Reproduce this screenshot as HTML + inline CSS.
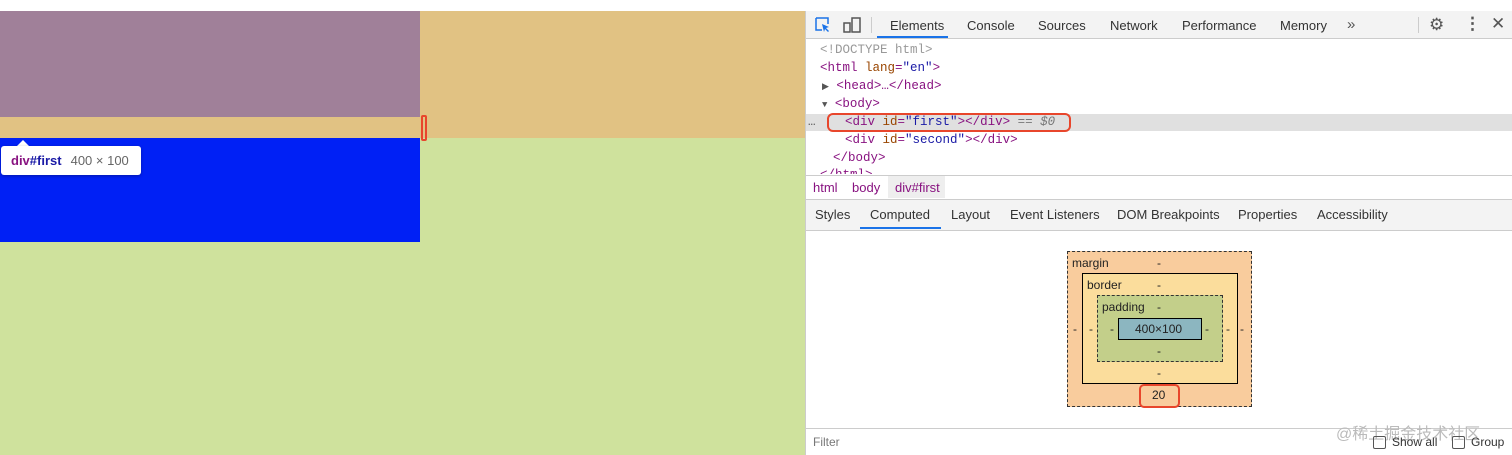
<!DOCTYPE html>
<html><head><meta charset="utf-8"><style>
body{margin:0;width:1512px;height:455px;overflow:hidden;position:relative;font-family:"Liberation Sans",sans-serif;background:#fff}
.a{position:absolute}
.m{font-family:"Liberation Mono",monospace;font-size:12.5px}
.t{font-size:13px;color:#333}
.tg{color:#881280}.at{color:#994500}.av{color:#1a1aa6}
</style></head><body>
<div class="a" style="left:0;top:0;width:1512px;height:11px;background:#fff;border-bottom:1px solid #ccc"></div>
<div class="a" style="left:0;top:11px;width:420px;height:106px;background:#a08099"></div>
<div class="a" style="left:0;top:117px;width:420px;height:21px;background:#e1c283"></div>
<div class="a" style="left:420px;top:11px;width:385px;height:127px;background:#e1c283"></div>
<div class="a" style="left:0;top:138px;width:420px;height:104px;background:#0020f5"></div>
<div class="a" style="left:420px;top:138px;width:385px;height:317px;background:#cfe29d"></div>
<div class="a" style="left:0;top:242px;width:420px;height:213px;background:#cfe29d"></div>
<div class="a" style="left:421px;top:115px;width:6px;height:26px;border:2px solid #e8462c;border-radius:2px;box-sizing:border-box"></div>
<div class="a" style="left:16px;top:140px;width:0;height:0;border:7px solid transparent;border-bottom-color:#fff;border-top:0"></div>
<div class="a" style="left:1px;top:146px;width:140px;height:29px;background:#fff;border-radius:3px;box-shadow:0 1px 3px rgba(0,0,0,.3);font-size:13px;line-height:29px;white-space:nowrap"><b style="margin-left:10px;color:#881280">div</b><b style="color:#1a1aa6">#first</b><span style="color:#666;margin-left:9px">400 × 100</span></div>

<div class="a" style="left:805px;top:11px;width:707px;height:444px;background:#fff;border-left:1px solid #ccc"></div>
<div class="a" style="left:806px;top:11px;width:706px;height:27px;background:#f3f3f3;border-bottom:1px solid #ccc"></div>
<svg class="a" style="left:814px;top:16px" width="50" height="18"><path d="M2 2h12v6M2 2v12h6" fill="none" stroke="#1a73e8" stroke-width="1.5"/><path d="M8 8l7 3-3 1 3 3-1 1-3-3-1 3z" fill="#1a73e8"/><rect x="38" y="2" width="8" height="14" fill="none" stroke="#555" stroke-width="1.5"/><rect x="30" y="7" width="6" height="9" fill="none" stroke="#555" stroke-width="1.5"/></svg>
<div class="a" style="left:871px;top:17px;width:1px;height:16px;background:#ccc"></div>
<div class="a t" style="left:890px;top:18px">Elements</div>
<div class="a" style="left:877px;top:36px;width:71px;height:2px;background:#1a73e8"></div>
<div class="a t" style="left:967px;top:18px">Console</div>
<div class="a t" style="left:1038px;top:18px">Sources</div>
<div class="a t" style="left:1110px;top:18px">Network</div>
<div class="a t" style="left:1182px;top:18px">Performance</div>
<div class="a t" style="left:1280px;top:18px">Memory</div>
<div class="a t" style="left:1347px;top:16px;font-size:15px;color:#555">»</div>
<div class="a" style="left:1418px;top:17px;width:1px;height:16px;background:#ccc"></div>
<div class="a" style="left:1429px;top:15px;font-size:17px;color:#555">⚙</div>
<div class="a" style="left:1464px;top:14px;font-size:17px;color:#555;font-weight:bold">⋮</div>
<div class="a" style="left:1491px;top:14px;font-size:17px;color:#555">✕</div>

<div class="a" style="left:806px;top:114px;width:706px;height:17px;background:#e0e0e0"></div>
<div class="a m" style="left:820px;top:43px;color:#999">&lt;!DOCTYPE html&gt;</div>
<div class="a m tg" style="left:820px;top:61px">&lt;html <span class="at">lang</span>=<span class="av">"en"</span>&gt;</div>
<div class="a m tg" style="left:822px;top:79px"><span style="color:#555;font-size:9px">▶</span> &lt;head&gt;…&lt;/head&gt;</div>
<div class="a m tg" style="left:822px;top:97px"><span style="color:#555;font-size:9px">▼</span> &lt;body&gt;</div>
<div class="a m" style="left:808px;top:115px;color:#555">…</div>
<div class="a m tg" style="left:845px;top:115px">&lt;div <span class="at">id</span>=<span class="av">"first"</span>&gt;&lt;/div&gt; <span style="color:#777">== <i>$0</i></span></div>
<div class="a" style="left:827px;top:113px;width:244px;height:19px;border:2px solid #e8462c;border-radius:6px;box-sizing:border-box"></div>
<div class="a m tg" style="left:845px;top:133px">&lt;div <span class="at">id</span>=<span class="av">"second"</span>&gt;&lt;/div&gt;</div>
<div class="a m tg" style="left:833px;top:151px">&lt;/body&gt;</div>
<div class="a m tg" style="left:820px;top:168px;height:6px;overflow:hidden">&lt;/html&gt;</div>
<div class="a" style="left:806px;top:175px;width:706px;height:1px;background:#ccc"></div>
<div class="a" style="left:888px;top:176px;width:57px;height:22px;background:#eee"></div>
<div class="a t" style="left:813px;top:180px;color:#881280">html</div>
<div class="a t" style="left:852px;top:180px;color:#881280">body</div>
<div class="a t" style="left:895px;top:180px;color:#881280">div#first</div>
<div class="a" style="left:806px;top:199px;width:706px;height:30px;background:#f3f3f3;border-top:1px solid #ccc;border-bottom:1px solid #ccc"></div>
<div class="a t" style="left:815px;top:207px">Styles</div>
<div class="a t" style="left:870px;top:207px">Computed</div>
<div class="a" style="left:860px;top:227px;width:81px;height:2px;background:#1a73e8"></div>
<div class="a t" style="left:951px;top:207px">Layout</div>
<div class="a t" style="left:1010px;top:207px">Event Listeners</div>
<div class="a t" style="left:1117px;top:207px">DOM Breakpoints</div>
<div class="a t" style="left:1238px;top:207px">Properties</div>
<div class="a t" style="left:1317px;top:207px">Accessibility</div>

<div class="a" style="left:1067px;top:251px;width:185px;height:156px;background:#f9cc9d;border:1px dashed #333;box-sizing:border-box"></div>
<div class="a" style="left:1082px;top:273px;width:156px;height:111px;background:#fbdd9c;border:1px solid #000;box-sizing:border-box"></div>
<div class="a" style="left:1097px;top:295px;width:126px;height:67px;background:#c3cf8a;border:1px dashed #333;box-sizing:border-box"></div>
<div class="a" style="left:1118px;top:318px;width:84px;height:22px;background:#8cb6c0;border:1px solid #000;box-sizing:border-box"></div>
<div class="a" style="font-size:12px;color:#222;left:0;top:0">
<span class="a" style="left:1072px;top:256px">margin</span><span class="a" style="left:1157px;top:256px">-</span>
<span class="a" style="left:1087px;top:278px">border</span><span class="a" style="left:1157px;top:278px">-</span>
<span class="a" style="left:1102px;top:300px">padding</span><span class="a" style="left:1157px;top:300px">-</span>
<span class="a" style="left:1135px;top:322px">400×100</span>
<span class="a" style="left:1157px;top:344px">-</span><span class="a" style="left:1157px;top:366px">-</span>
<span class="a" style="left:1073px;top:322px">-</span><span class="a" style="left:1089px;top:322px">-</span><span class="a" style="left:1110px;top:322px">-</span>
<span class="a" style="left:1205px;top:322px">-</span><span class="a" style="left:1226px;top:322px">-</span><span class="a" style="left:1240px;top:322px">-</span>
<span class="a" style="left:1152px;top:388px">20</span>
</div>
<div class="a" style="left:1139px;top:384px;width:41px;height:24px;border:2px solid #e8462c;border-radius:5px;box-sizing:border-box"></div>

<div class="a" style="left:806px;top:428px;width:706px;height:1px;background:#ccc"></div>
<div class="a" style="left:813px;top:435px;font-size:12px;color:#777">Filter</div>
<div class="a" style="left:1336px;top:420px;font-size:16px;color:#bbb;font-family:'Liberation Sans','Noto Sans CJK SC',sans-serif">@稀土掘金技术社区</div>
<div class="a" style="left:1373px;top:436px;width:11px;height:11px;border:1px solid #555;border-radius:2px"></div>
<div class="a" style="left:1392px;top:435px;font-size:12px;color:#333">Show all</div>
<div class="a" style="left:1452px;top:436px;width:11px;height:11px;border:1px solid #555;border-radius:2px"></div>
<div class="a" style="left:1471px;top:435px;font-size:12px;color:#333">Group</div>
</body></html>
